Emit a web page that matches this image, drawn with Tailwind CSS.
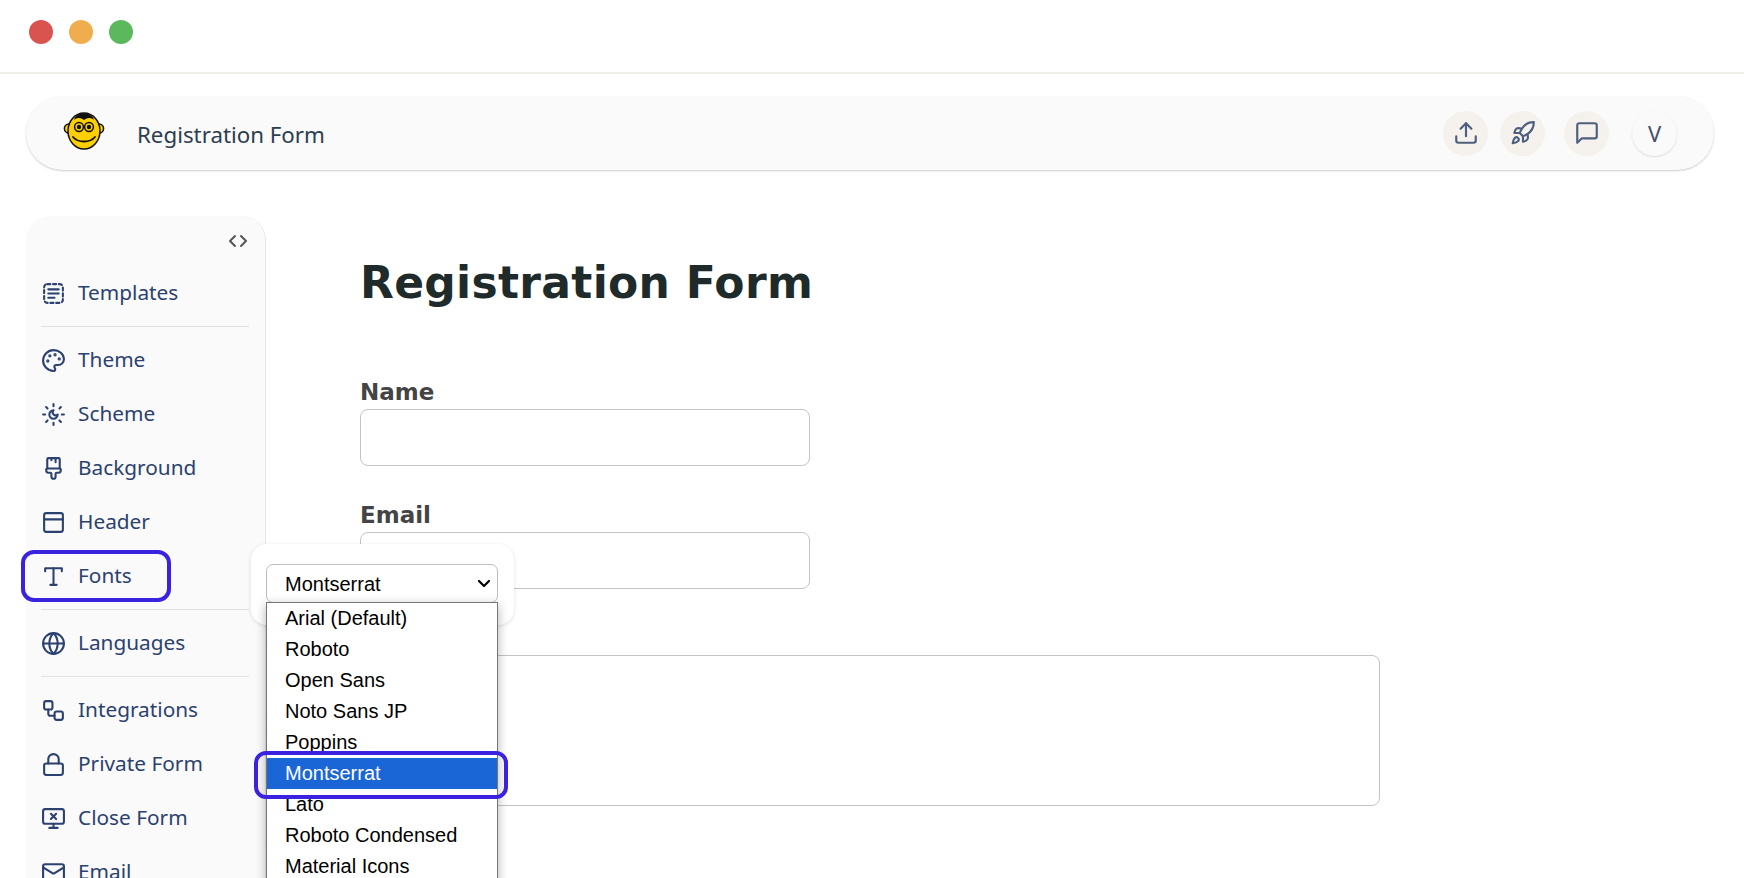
<!DOCTYPE html>
<html lang="en">
<head>
  <meta charset="UTF-8" />
  <title>Registration Form</title>
  <meta name="viewport" content="width=device-width, initial-scale=1" />
  <script src="https://cdn.jsdelivr.net/npm/@tailwindcss/browser@4"></script>
</head>
<body class="relative h-screen overflow-hidden bg-white font-['Noto_Sans',sans-serif]">

  <!-- window bar -->
  <div class="h-[74px] border-b-2 border-[#f0eee9] flex items-center gap-4 pl-[29px] pb-[8px]">
    <span class="w-6 h-6 rounded-full bg-[#d9534f]"></span>
    <span class="w-6 h-6 rounded-full bg-[#f0ad4e]"></span>
    <span class="w-6 h-6 rounded-full bg-[#5cb85c]"></span>
  </div>

  <!-- header -->
  <header class="ml-[26px] mr-[30px] mt-[22px] h-[74px] rounded-[37px] bg-[#fafafa] shadow-[0_1px_2px_rgba(0,0,0,0.2)] flex items-center pl-[37px] pr-[37px]">
    <svg class="w-[42px] h-[38px] -mt-[5px]" viewBox="0 0 42 38">
      <circle cx="6" cy="16.5" r="4.6" fill="#fcd000" stroke="#111" stroke-width="1.5"/>
      <circle cx="36" cy="16.5" r="4.6" fill="#fcd000" stroke="#111" stroke-width="1.5"/>
      <ellipse cx="21" cy="19" rx="16" ry="18" fill="#fcd000" stroke="#111" stroke-width="1.5"/>
      <path d="M11 8C13 -1 29 -1 31 8C27 5 24 6 21 8C18 6 15 5 11 8Z" fill="#111"/>
      <circle cx="16" cy="15" r="4.4" fill="#fcd000" stroke="#111" stroke-width="1.5"/>
      <circle cx="26" cy="15" r="4.4" fill="#fcd000" stroke="#111" stroke-width="1.5"/>
      <circle cx="16" cy="15" r="2.2" fill="#111"/>
      <circle cx="26" cy="15" r="2.2" fill="#111"/>
      <path d="M10 25C15 31 27 31 32 25" fill="none" stroke="#111" stroke-width="1.8" stroke-linecap="round"/>
    </svg>
    <span class="ml-[32px] pt-[4px] text-[22.3px] text-[#2c3e50]">Registration Form</span>
    <div class="ml-auto flex items-center text-[#4f5f7f]">
      <button class="w-[45px] h-[45px] rounded-full bg-[#f5f2ed] flex items-center justify-center">
        <svg class="w-[26px] h-[26px]" viewBox="0 0 24 24" fill="none" stroke="currentColor" stroke-width="2" stroke-linecap="round" stroke-linejoin="round"><path d="M21 15v4a2 2 0 0 1-2 2H5a2 2 0 0 1-2-2v-4"/><path d="M17 8l-5-5-5 5"/><path d="M12 3v12"/></svg>
      </button>
      <button class="ml-[12px] w-[45px] h-[45px] rounded-full bg-[#f5f2ed] flex items-center justify-center">
        <svg class="w-[26px] h-[26px]" viewBox="0 0 24 24" fill="none" stroke="currentColor" stroke-width="2" stroke-linecap="round" stroke-linejoin="round"><path d="M4.5 16.5c-1.5 1.26-2 5-2 5s3.74-.5 5-2c.71-.84.7-2.13-.09-2.91a2.18 2.18 0 0 0-2.91-.09z"/><path d="m12 15-3-3a22 22 0 0 1 2-3.95A12.88 12.88 0 0 1 22 2c0 2.72-.78 7.5-6 11a22.35 22.35 0 0 1-4 2z"/><path d="M9 12H4s.55-3.03 2-4c1.62-1.08 5 0 5 0"/><path d="M12 15v5s3.03-.55 4-2c1.08-1.62 0-5 0-5"/></svg>
      </button>
      <button class="ml-[19px] w-[45px] h-[45px] rounded-full bg-[#f5f2ed] flex items-center justify-center">
        <svg class="w-[26px] h-[26px]" viewBox="0 0 24 24" fill="none" stroke="currentColor" stroke-width="2" stroke-linecap="round" stroke-linejoin="round"><path d="M21 15a2 2 0 0 1-2 2H7l-4 4V5a2 2 0 0 1 2-2h14a2 2 0 0 1 2 2z"/></svg>
      </button>
      <button class="ml-[23px] w-[45px] h-[45px] rounded-full bg-[#fafafa] shadow-[0_1px_2px_rgba(0,0,0,0.12)] text-[22px] text-[#44506a]">V</button>
    </div>
  </header>

  <div class="flex mt-[46px] ml-[26px]">
    <!-- sidebar -->
    <aside class="w-[240px] shrink-0 rounded-t-[24px] bg-[#fafafa] border-r border-[#e6e6e6] pl-[15px] pr-[16px] text-[20.8px] text-[#2b4170] h-[700px]">
      <div class="h-[50px] flex justify-end items-center pr-[1px]">
        <svg class="w-5 h-5 text-[#555]" viewBox="0 0 20 20" fill="none" stroke="currentColor" stroke-width="2" stroke-linecap="round" stroke-linejoin="round"><path d="M7 5l-5 5 5 5"/><path d="M13 5l5 5-5 5"/></svg>
      </div>
      <a class="h-[54px] flex items-center gap-[12px]">
        <svg class="w-[25px] h-[25px]" viewBox="0 0 24 24" fill="none" stroke="currentColor" stroke-width="2" stroke-linecap="round" stroke-linejoin="round"><rect x="3" y="3" width="18" height="18" rx="3" stroke-dasharray="3 2.6"/><path d="M7 8h10"/><path d="M7 12h10"/><path d="M7 16h6"/></svg>
        Templates
      </a>
      <hr class="my-[6px] border-[#e2e2e2]" />
      <a class="h-[54px] flex items-center gap-[12px]">
        <svg class="w-[25px] h-[25px]" viewBox="0 0 24 24" fill="none" stroke="currentColor" stroke-width="2" stroke-linecap="round" stroke-linejoin="round"><circle cx="13.5" cy="6.5" r=".6" fill="currentColor"/><circle cx="17.5" cy="10.5" r=".6" fill="currentColor"/><circle cx="8.5" cy="7.5" r=".6" fill="currentColor"/><circle cx="6.5" cy="12.5" r=".6" fill="currentColor"/><path d="M12 2C6.5 2 2 6.5 2 12s4.5 10 10 10c.926 0 1.648-.746 1.648-1.688 0-.437-.18-.835-.437-1.125-.29-.289-.438-.652-.438-1.125a1.64 1.64 0 0 1 1.668-1.668h1.996c3.051 0 5.555-2.503 5.555-5.554C21.965 6.012 17.461 2 12 2z"/></svg>
        Theme
      </a>
      <a class="h-[54px] flex items-center gap-[12px]">
        <svg class="w-[25px] h-[25px]" viewBox="0 0 24 24" fill="none" stroke="currentColor" stroke-width="2" stroke-linecap="round" stroke-linejoin="round"><path d="M12 8a2.83 2.83 0 0 0 4 4 4 4 0 1 1-4-4"/><path d="M12 2v2"/><path d="M12 20v2"/><path d="M4.9 4.9l1.4 1.4"/><path d="M17.7 17.7l1.4 1.4"/><path d="M2 12h2"/><path d="M20 12h2"/><path d="M6.3 17.7l-1.4 1.4"/><path d="M19.1 4.9l-1.4 1.4"/></svg>
        Scheme
      </a>
      <a class="h-[54px] flex items-center gap-[12px]">
        <svg class="w-[25px] h-[25px]" viewBox="0 0 24 24" fill="none" stroke="currentColor" stroke-width="2" stroke-linecap="round" stroke-linejoin="round"><path d="M10 2v2"/><path d="M14 2v4"/><path d="M17 2a1 1 0 0 1 1 1v9H6V3a1 1 0 0 1 1-1z"/><path d="M6 12a1 1 0 0 0-1 1v1a2 2 0 0 0 2 2h2a1 1 0 0 1 1 1v2.9a2 2 0 1 0 4 0V17a1 1 0 0 1 1-1h2a2 2 0 0 0 2-2v-1a1 1 0 0 0-1-1"/></svg>
        Background
      </a>
      <a class="h-[54px] flex items-center gap-[12px]">
        <svg class="w-[25px] h-[25px]" viewBox="0 0 24 24" fill="none" stroke="currentColor" stroke-width="2" stroke-linecap="round" stroke-linejoin="round"><rect x="3" y="3" width="18" height="18" rx="2"/><path d="M3 9h18"/></svg>
        Header
      </a>
      <a class="h-[54px] flex items-center gap-[12px]">
        <svg class="w-[25px] h-[25px]" viewBox="0 0 24 24" fill="none" stroke="currentColor" stroke-width="2" stroke-linecap="round" stroke-linejoin="round"><path d="M4 7V4h16v3"/><path d="M12 4v16"/><path d="M9 20h6"/></svg>
        Fonts
      </a>
      <hr class="my-[6px] border-[#e2e2e2]" />
      <a class="h-[54px] flex items-center gap-[12px]">
        <svg class="w-[25px] h-[25px]" viewBox="0 0 24 24" fill="none" stroke="currentColor" stroke-width="2" stroke-linecap="round" stroke-linejoin="round"><circle cx="12" cy="12" r="10"/><path d="M12 2a14.5 14.5 0 0 0 0 20 14.5 14.5 0 0 0 0-20"/><path d="M2 12h20"/></svg>
        Languages
      </a>
      <hr class="my-[6px] border-[#e2e2e2]" />
      <a class="h-[54px] flex items-center gap-[12px]">
        <svg class="w-[25px] h-[25px]" viewBox="0 0 24 24" fill="none" stroke="currentColor" stroke-width="2" stroke-linecap="round" stroke-linejoin="round"><rect x="3" y="3" width="8" height="8" rx="2"/><path d="M7 11v4a2 2 0 0 0 2 2h4"/><rect x="13" y="13" width="8" height="8" rx="2"/></svg>
        Integrations
      </a>
      <a class="h-[54px] flex items-center gap-[12px]">
        <svg class="w-[25px] h-[25px]" viewBox="0 0 24 24" fill="none" stroke="currentColor" stroke-width="2" stroke-linecap="round" stroke-linejoin="round"><rect x="3" y="11" width="18" height="11" rx="2"/><path d="M7 11V7a5 5 0 0 1 10 0v4"/></svg>
        Private Form
      </a>
      <a class="h-[54px] flex items-center gap-[12px]">
        <svg class="w-[25px] h-[25px]" viewBox="0 0 24 24" fill="none" stroke="currentColor" stroke-width="2" stroke-linecap="round" stroke-linejoin="round"><path d="M14.5 7.5l-5 5"/><path d="M9.5 7.5l5 5"/><rect x="2" y="3" width="20" height="14" rx="2"/><path d="M12 17v4"/><path d="M8 21h8"/></svg>
        Close Form
      </a>
      <a class="h-[54px] flex items-center gap-[12px]">
        <svg class="w-[25px] h-[25px]" viewBox="0 0 24 24" fill="none" stroke="currentColor" stroke-width="2" stroke-linecap="round" stroke-linejoin="round"><rect x="2" y="4" width="20" height="16" rx="2"/><path d="M22 7l-8.97 5.7a1.94 1.94 0 0 1-2.06 0L2 7"/></svg>
        Email
      </a>
    </aside>

    <!-- form -->
    <main class="pl-[94px] pt-[39px] font-['DejaVu_Sans',sans-serif]">
      <h1 class="text-[44px] leading-[56px] tracking-[0.3px] font-bold text-[#1f2a2a]">Registration Form</h1>
      <form class="mt-[66px]">
        <label class="block text-[23px] leading-[30px] font-bold text-[#444]">Name</label>
        <input type="text" class="block mt-[2px] w-[450px] h-[57px] rounded-lg border border-[#c4c4c4] bg-white" />
        <label class="block mt-[34px] text-[23px] leading-[30px] font-bold text-[#444]">Email</label>
        <input type="text" class="block mt-[2px] w-[450px] h-[57px] rounded-lg border border-[#c4c4c4] bg-white" />
        <textarea class="block mt-[66px] w-[1020px] h-[151px] rounded-lg border border-[#c4c4c4] bg-white resize-none"></textarea>
      </form>
    </main>
  </div>

  <!-- font picker popover -->
  <div class="absolute left-[251px] top-[544px] w-[263px] h-[81px] rounded-2xl bg-white shadow-[0_1px_4px_rgba(0,0,0,0.12)] pl-[15px] pt-[20px] font-['Liberation_Sans',sans-serif]">
    <div class="relative w-[232px] h-[39px]">
      <select class="appearance-none w-full h-full rounded-[7px] border border-[#bdbdbd] bg-white pl-[18px] text-[20px] text-black">
        <option>Montserrat</option>
      </select>
      <svg class="absolute right-[6px] top-[11px] w-4 h-4 text-black" viewBox="0 0 16 16" fill="none" stroke="currentColor" stroke-width="2.2" stroke-linecap="round" stroke-linejoin="round"><path d="M3 6l5 5 5-5"/></svg>
    </div>
  </div>
  <ul class="absolute left-[266px] top-[602px] w-[232px] h-[300px] border border-[#767676] bg-white shadow-[0_3px_10px_rgba(0,0,0,0.3)] text-[20px] leading-[31px] text-black font-['Liberation_Sans',sans-serif]">
    <li class="pl-[18px]">Arial (Default)</li>
    <li class="pl-[18px]">Roboto</li>
    <li class="pl-[18px]">Open Sans</li>
    <li class="pl-[18px]">Noto Sans JP</li>
    <li class="pl-[18px]">Poppins</li>
    <li class="pl-[18px] bg-[#1a66d6] text-white">Montserrat</li>
    <li class="pl-[18px]">Lato</li>
    <li class="pl-[18px]">Roboto Condensed</li>
    <li class="pl-[18px]">Material Icons</li>
  </ul>

  <!-- annotation outlines -->
  <div class="absolute left-[21px] top-[550px] w-[150px] h-[52px] rounded-[13px] border-[4px] border-[#3a22e0]"></div>
  <div class="absolute left-[254px] top-[751px] w-[254px] h-[48px] rounded-[12px] border-[4px] border-[#3a22e0]"></div>
</body>
</html>
